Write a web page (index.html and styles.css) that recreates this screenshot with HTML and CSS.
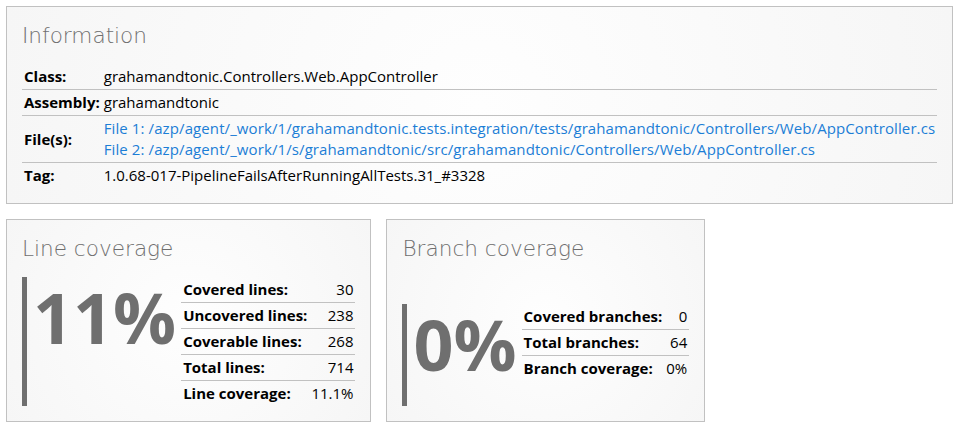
FILE: index.html
```html
<!DOCTYPE html>
<html lang="en">
<head>
<meta charset="utf-8">
<title>Coverage - AppController</title>
<link rel="stylesheet" href="styles.css">
</head>
<body>
<div class="page">
  <div class="card-group">
    <div class="card card-wide">
      <div class="card-header">Information</div>
      <div class="card-body">
        <table class="overview">
          <tr><th>Class:</th><td>grahamandtonic.Controllers.Web.AppController</td></tr>
          <tr><th>Assembly:</th><td>grahamandtonic</td></tr>
          <tr><th>File(s):</th><td><a class="file" href="#">File 1: /azp/agent/_work/1/grahamandtonic.tests.integration/tests/grahamandtonic/Controllers/Web/AppController.cs</a><a class="file" href="#">File 2: /azp/agent/_work/1/s/grahamandtonic/src/grahamandtonic/Controllers/Web/AppController.cs</a></td></tr>
          <tr><th>Tag:</th><td>1.0.68-017-PipelineFailsAfterRunningAllTests.31_#3328</td></tr>
        </table>
      </div>
    </div>
  </div>
  <div class="card-group">
    <div class="card">
      <div class="card-header">Line coverage</div>
      <div class="card-body">
        <div class="large cardpercentagebar">11%</div>
        <div class="table">
          <table class="stats">
            <tr><th>Covered lines:</th><td>30</td></tr>
            <tr><th>Uncovered lines:</th><td>238</td></tr>
            <tr><th>Coverable lines:</th><td>268</td></tr>
            <tr><th>Total lines:</th><td>714</td></tr>
            <tr><th>Line coverage:</th><td>11.1%</td></tr>
          </table>
        </div>
      </div>
    </div>
    <div class="card">
      <div class="card-header">Branch coverage</div>
      <div class="card-body">
        <div class="large cardpercentagebar">0%</div>
        <div class="table">
          <table class="stats">
            <tr><th>Covered branches:</th><td>0</td></tr>
            <tr><th>Total branches:</th><td>64</td></tr>
            <tr><th>Branch coverage:</th><td>0%</td></tr>
          </table>
        </div>
      </div>
    </div>
  </div>
</div>
</body>
</html>
```
FILE: styles.css
```css
html {
  margin: 0;
  padding: 0;
  background: #ffffff;
}

body {
  margin: 0;
  padding: 0;
  color: #000;
  font-family: "Open Sans", "Noto Sans", sans-serif;
  font-size: 15px;
}

.page {
  padding: 6px 14px 6px 6px;
  display: flex;
  flex-direction: column;
  gap: 15px;
}

.card-group {
  display: flex;
  flex-direction: row;
  gap: 15px;
  align-items: stretch;
}

.card {
  display: flex;
  flex-direction: column;
  background: radial-gradient(circle, #fefefe 0%, #f6f6f6 100%);
  border: 1px solid #c1c1c1;
  padding: 15px;
  color: #6f6f6f;
}

.card-wide {
  flex: 1;
}

.card-header {
  font-family: "DejaVu Sans", sans-serif;
  font-weight: 200;
  font-size: 21.6px;
  line-height: 27px;
  color: #6f6f6f;
  margin-bottom: 15px;
  flex-grow: 1;
}

.card-body {
  display: flex;
  flex-direction: row;
}

table {
  border-collapse: collapse;
  color: #000;
}

th, td {
  padding: 2px;
  line-height: 21px;
  font-size: 15px;
  vertical-align: middle;
  white-space: nowrap;
}

tr:not(:last-child) th,
tr:not(:last-child) td {
  border-bottom: 1px solid #c1c1c1;
}

th {
  text-align: left;
  font-weight: bold;
}

.overview {
  width: 100%;
}

.overview th {
  width: 1%;
}

.overview td {
  text-align: left;
}

.file {
  display: block;
  color: #1c7ed6;
  text-decoration: none;
  letter-spacing: 0.1px;
}

.stats td {
  text-align: right;
}

.large {
  font-size: 70px;
  line-height: 72px;
  font-weight: bold;
  text-align: center;
  color: #6f6f6f;
  padding: 4px 5px 26px 6px;
}

.cardpercentagebar {
  border-left: 5px solid #6f6f6f;
}

.table {
  display: flex;
  flex-direction: column;
}
```
